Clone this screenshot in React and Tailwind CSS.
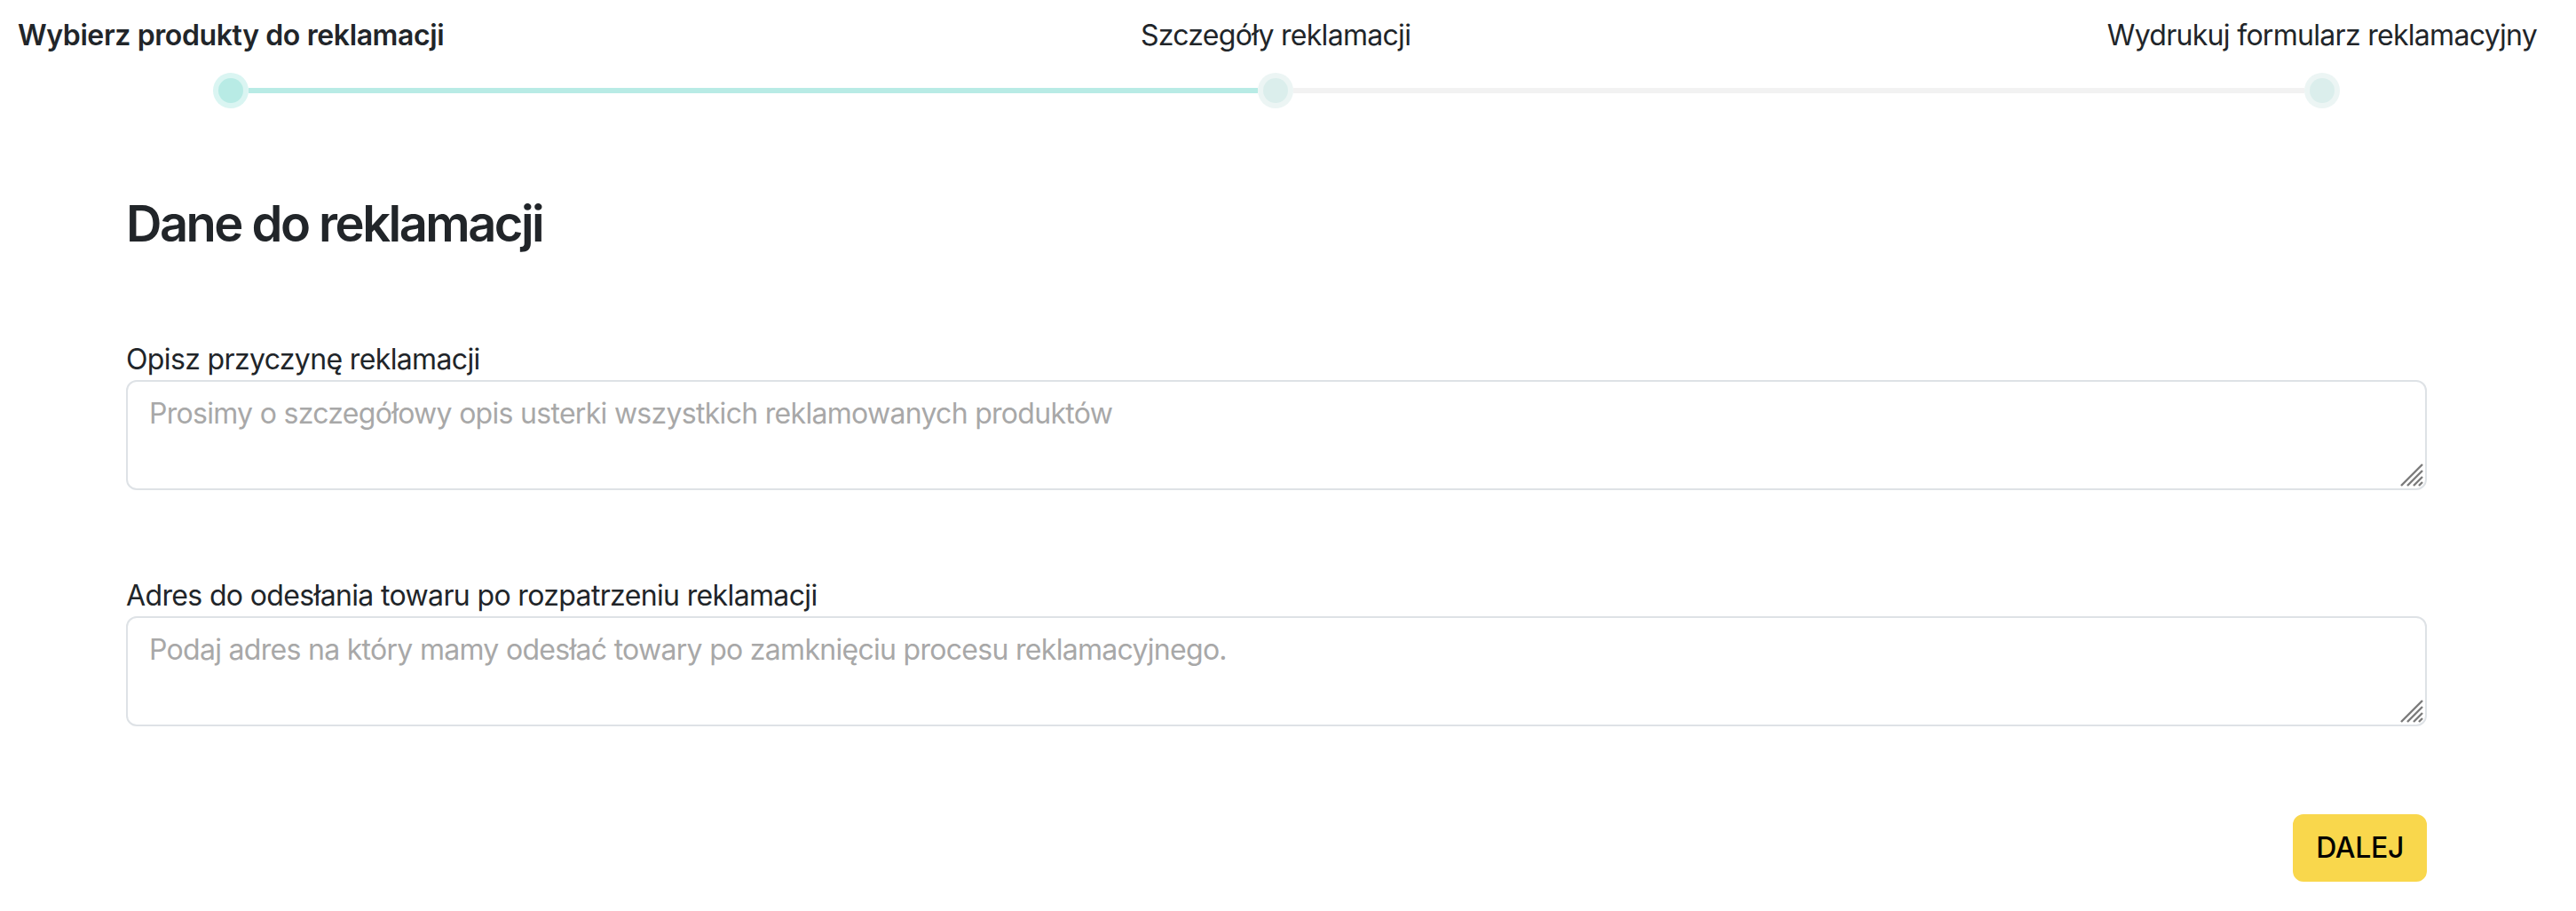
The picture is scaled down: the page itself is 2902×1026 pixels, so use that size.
import React from 'react';

const steps = [
  { label: 'Wybierz produkty do reklamacji', done: true, bold: true },
  { label: 'Szczegóły reklamacji', done: false },
  { label: 'Wydrukuj formularz reklamacyjny', done: false },
];

const Dot = ({ done }) => (
  <div
    className={`w-[40px] h-[40px] rounded-full flex items-center justify-center shrink-0 ${
      done ? 'bg-[#daf5f2]' : 'bg-[#ecf5f4]'
    }`}
  >
    <div className={`w-[28px] h-[28px] rounded-full ${done ? 'bg-[#b8ebe5]' : 'bg-[#dbeeec]'}`} />
  </div>
);

const Step = ({ step, leftLine, rightLine }) => (
  <div className="flex flex-col items-center">
    <div
      className={`h-[48px] leading-[48px] text-[32px] whitespace-nowrap text-[#212529] ${
        step.bold ? 'font-semibold tracking-[-0.012em]' : 'font-normal tracking-[-0.022em]'
      }`}
    >
      {step.label}
    </div>
    <div className="flex items-center self-stretch mt-[18px]">
      <div className={`flex-1 h-[6px] ${leftLine || 'bg-transparent'}`} />
      <Dot done={step.done} />
      <div className={`flex-1 h-[6px] ${rightLine || 'bg-transparent'}`} />
    </div>
  </div>
);

// chrome-like resize grip, drawn at the 2x size of the reference
const Grip = () => (
  <svg
    className="absolute right-[4px] bottom-[4px] pointer-events-none"
    width="26"
    height="26"
    viewBox="0 0 26 26"
    stroke="#7b7b7b"
    strokeWidth="2.4"
    strokeLinecap="butt"
  >
    <line x1="1" y1="25" x2="25" y2="1" />
    <line x1="8" y1="25" x2="25" y2="8" />
    <line x1="15" y1="25" x2="25" y2="15" />
    <line x1="21" y1="25" x2="25" y2="21" />
  </svg>
);

const Field = ({ label, placeholder, className }) => (
  <div className={className}>
    <label className="block text-[32px] leading-[48px] tracking-[-0.02em] text-[#212529]">{label}</label>
    <div className="relative mt-[-1px]">
      <textarea
        rows={2}
        placeholder={placeholder}
        className="block w-full h-[124px] resize-none border-2 border-[#dee2e6] rounded-[12px] px-[24px] py-[12px] text-[32px] leading-[1.5] tracking-[-0.022em] text-[#212529] placeholder:text-[#a8a8a8] focus:outline-none"
      />
      <Grip />
    </div>
  </div>
);

export default function App() {
  return (
    <div className="min-h-screen bg-white font-['Inter','Liberation_Sans',sans-serif] text-[#212529]">
      {/* stepper */}
      <div className="flex pl-[20px] pr-[44px] pt-[16px]">
        <Step step={steps[0]} rightLine="bg-[#b8ebe5]" />
        <div className="flex-1 self-start h-[6px] mt-[83px] bg-[#b8ebe5]" />
        <Step step={steps[1]} leftLine="bg-[#b8ebe5]" rightLine="bg-[#f2f2f2]" />
        <div className="flex-1 self-start h-[6px] mt-[83px] bg-[#f2f2f2]" />
        <Step step={steps[2]} leftLine="bg-[#f2f2f2]" />
      </div>

      <div className="ml-[142px] w-[2592px]">
        <h3 className="mt-[97px] text-[56px] leading-[1.2] font-semibold tracking-[-0.045em]">Dane do reklamacji</h3>

        <Field
          className="mt-[95px]"
          label="Opisz przyczynę reklamacji"
          placeholder="Prosimy o szczegółowy opis usterki wszystkich reklamowanych produktów"
        />
        <Field
          className="mt-[95px]"
          label="Adres do odesłania towaru po rozpatrzeniu reklamacji"
          placeholder="Podaj adres na który mamy odesłać towary po zamknięciu procesu reklamacyjnego."
        />

        <div className="flex justify-end mt-[99px]">
          <button
            type="button"
            className="h-[76px] px-[24px] border-2 border-[#f9d74c] bg-[#f9d74c] rounded-[12px] text-[32px] leading-[48px] font-medium tracking-[-0.01em] text-black"
          >
            DALEJ
          </button>
        </div>
      </div>
    </div>
  );
}
